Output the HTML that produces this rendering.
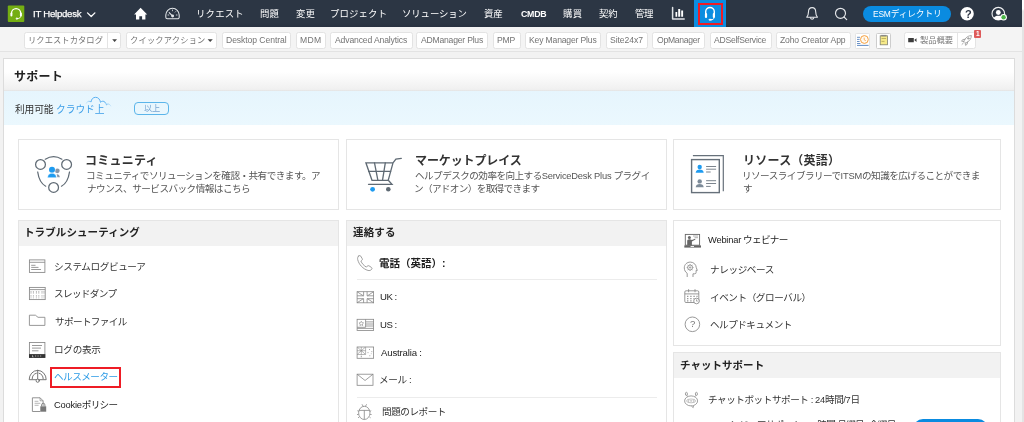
<!DOCTYPE html>
<html lang="ja">
<head>
<meta charset="utf-8">
<title>サポート - ServiceDesk Plus</title>
<style>
*{box-sizing:border-box;margin:0;padding:0}
html,body{width:1024px;height:422px;overflow:hidden}
body{position:relative;background:#f2f2f2;font-family:"Liberation Sans","Noto Sans CJK JP",sans-serif;font-size:9.75px;color:#333}
.t{will-change:transform;position:absolute;white-space:nowrap;line-height:1;z-index:5}
.a{position:absolute}
#hdr{left:0;top:0;width:1024px;height:27.3px;background:linear-gradient(#2c3644 0%,#2c3644 85%,#283140 100%)}
#tabon{left:694px;top:0;width:32px;height:27.3px;background:#0c8de0}
#tabred{left:698px;top:3px;width:25.2px;height:21.8px;border:2px solid #ee1c25}
#esm{left:862.5px;top:5.5px;width:88.5px;height:16.5px;border-radius:9px;background:#0a8be0}
#tbar{left:0;top:27.3px;width:1024px;height:24.4px;background:#f4f4f4;border-bottom:1px solid #e3e3e3}
.btn{position:absolute;top:32px;height:16.7px;background:#fff;border:1px solid #e3e3e3;border-radius:2.5px}
#rstrip{left:1022.2px;top:0;width:2px;height:422px;background:linear-gradient(#fff 0,#fff 9px,#e4e4e4 11px,#e4e4e4 100%);z-index:9}
#panel{left:3.3px;top:57.8px;width:1012.2px;height:380px;background:#fff;border:1px solid #dcdcdc}
#ptitle{left:4.3px;top:58.8px;width:1010.2px;height:32.6px;background:linear-gradient(#fff 0%,#fff 40%,#f0f0f0 95%,#e2e2e2 100%)}
#band{left:4.3px;top:91.4px;width:1010.2px;height:33.4px;background:linear-gradient(#e6f5fd,#ebf8fe)}
#more{left:134px;top:102px;width:35px;height:12.6px;border:1px solid #5bb5ea;border-radius:4px}
.card{position:absolute;top:139px;height:70.5px;background:#fff;border:1px solid #e5e5e5}
.sec{position:absolute;background:#fff;border:1px solid #e5e5e5}
.sech{position:absolute;background:#f2f2f2}
.sep{position:absolute;height:1px;background:#ececec}
#hred{left:50.3px;top:366.5px;width:70.5px;height:21.1px;border:2px solid #ee1c25}
#chatbtn{left:913px;top:418.5px;width:75px;height:20px;border-radius:10px;background:#0a8be0}
svg{position:absolute;overflow:visible}
.l{letter-spacing:-0.2px;font-size:.97em}
</style>
</head>
<body>
<div class="a" id="hdr"></div>
<div class="a" id="tabon"></div>
<div class="a" id="tabred"></div>
<div class="a" id="esm"></div>
<div class="a" id="tbar"></div>
<div class="btn" style="left:24.3px;width:97.2px"></div>
<div class="a" style="left:107.4px;top:33px;width:1px;height:14.5px;background:#e4e4e4"></div>
<div class="btn" style="left:126.2px;width:91.3px"></div>
<div class="btn" style="left:222px;width:69.3px"></div>
<div class="btn" style="left:295.8px;width:30px"></div>
<div class="btn" style="left:329.5px;width:83px"></div>
<div class="btn" style="left:416.3px;width:72.2px"></div>
<div class="btn" style="left:493px;width:27.5px"></div>
<div class="btn" style="left:524.5px;width:76.8px"></div>
<div class="btn" style="left:605.5px;width:42px"></div>
<div class="btn" style="left:652px;width:52.5px"></div>
<div class="btn" style="left:709.5px;width:62.5px"></div>
<div class="btn" style="left:776px;width:74.6px"></div>
<div class="btn" style="left:855.3px;width:15.2px;top:33px;height:15.5px;border-radius:1.5px"></div>
<div class="btn" style="left:875.6px;width:15.5px;top:33px;height:15.5px;border-radius:1.5px;border-color:#cdcdcd"></div>
<div class="btn" style="left:903.8px;width:72.7px"></div>
<div class="a" style="left:957px;top:33px;width:1px;height:14.5px;background:#e4e4e4"></div>
<div class="a" style="left:974.4px;top:29.6px;width:6.6px;height:8.2px;background:#de5b5b;border-radius:1px"></div>
<div class="a" id="rstrip"></div>
<div class="a" id="panel"></div>
<div class="a" id="ptitle"></div>
<div class="a" id="band"></div>
<div class="a" id="more"></div>
<div class="card" style="left:18px;width:320.5px"></div>
<div class="card" style="left:345.7px;width:321.3px"></div>
<div class="card" style="left:673px;width:327.7px"></div>
<div class="sec" style="left:18px;top:219.5px;width:320.5px;height:230px"></div>
<div class="sech" style="left:19px;top:220.5px;width:318.5px;height:25.3px"></div>
<div class="sec" style="left:345.7px;top:219.5px;width:321.3px;height:230px"></div>
<div class="sech" style="left:346.7px;top:220.5px;width:319.3px;height:25.3px"></div>
<div class="sep" style="left:356.7px;top:279px;width:300px"></div>
<div class="sep" style="left:356.7px;top:397.3px;width:300px"></div>
<div class="sec" style="left:673px;top:219.5px;width:327.7px;height:126px"></div>
<div class="sec" style="left:673px;top:352px;width:327.7px;height:100px"></div>
<div class="sech" style="left:674px;top:353px;width:325.7px;height:25px"></div>
<div class="a" id="hred"></div>
<div class="a" id="chatbtn"></div>
<svg class="a" style="left:0;top:0;z-index:3" width="1024" height="422" viewBox="0 0 1024 422" fill="none">
<!-- cloud -->
<defs><linearGradient id="cg" x1="86" y1="0" x2="111.500" y2="0" gradientUnits="userSpaceOnUse"><stop offset="0" stop-color="#5eb3f0" stop-opacity=".15"/><stop offset=".22" stop-color="#4aa8f0" stop-opacity=".9"/><stop offset=".75" stop-color="#4aa8f0" stop-opacity=".9"/><stop offset="1" stop-color="#5eb3f0" stop-opacity=".1"/></linearGradient></defs>
<path d="M86.200 103.400c.6 -1.300 1.400 -2 2.400 -2.100c1 -.1 1.800 .1 2.500 .6c.1 -2.600 2 -4.600 4.500 -4.600c2.600 0 4.400 2 4.900 5c1.200 -1.300 3.200 -1.500 4.400 -.2c1 1 1.400 2 1.600 2.800c.8 -.9 1.900 -1.100 2.700 -.6c.8 .5 1.400 1.100 1.900 1.900" stroke="url(#cg)" stroke-width="1" stroke-linecap="round" stroke-linejoin="round"/>
<!-- community -->
<g stroke="#5f6a74" stroke-width="1.25" stroke-linecap="round">
<circle cx="40.500" cy="164.400" r="4.900" fill="#fff"/>
<circle cx="66.600" cy="164.400" r="4.900" fill="#fff"/>
<circle cx="53.600" cy="187.400" r="4.900" fill="#fff"/>
<path d="M45.300 159.200Q53.600 154.200 61.900 159.200"/>
<path d="M37.700 172Q39.300 182.900 45.700 186.200"/>
<path d="M69.500 172Q67.900 182.900 61.500 186.200"/>
</g>
<circle cx="57.300" cy="170.800" r="2.400" fill="#8896a8"/>
<path d="M56.600 174.200c1.800 -.2 3 .8 3.200 3h-2.400z" fill="#8896a8"/>
<circle cx="52" cy="169.700" r="3.500" fill="#fff"/>
<circle cx="52" cy="169.700" r="3" fill="#1e9bf0"/>
<path d="M47.500 177.700c.2 -3.200 2.100 -4.500 4.500 -4.500s4.300 1.300 4.500 4.500z" fill="#1e9bf0" stroke="#fff" stroke-width=".5"/>
<!-- cart -->
<g stroke="#5f6a74" stroke-width="1.300" stroke-linejoin="miter" stroke-linecap="round">
<path d="M401.300 158.300l-5.400 .8l-2.900 3.700h-27.100l6.100 17.500h16.200l4.800 -17.500"/>
<path d="M374.500 162.800l3.400 17.500M385.300 162.800l-2.800 17.500M368.600 171.400h22"/>
<path d="M388.300 180.300l3.700 4h-23.500"/>
</g>
<circle cx="372.600" cy="189.300" r="2.400" fill="#1e9bf0"/>
<circle cx="388.300" cy="189.300" r="2.300" fill="#5f6a74"/>
<!-- resources -->
<g stroke="#66707a" stroke-width="1.400">
<rect x="691.600" y="159.600" width="27.700" height="33" fill="#fff"/>
<path d="M692.900 155.700h30.400v35.600" stroke-width="1.200"/>
</g>
<circle cx="699.700" cy="167" r="2.200" fill="#1e9bf0"/>
<path d="M695.700 172.700c.2 -2.400 1.800 -3.200 4 -3.200s3.800 .8 4 3.200z" fill="#1e9bf0"/>
<circle cx="699.700" cy="181.400" r="2.200" fill="#7d8b99"/>
<path d="M695.700 187.200c.2 -2.400 1.800 -3.200 4 -3.200s3.800 .8 4 3.200z" fill="#7d8b99"/>
<g stroke="#7b848d" stroke-width="1">
<path d="M706.100 166.500h10M706.100 169.200h10M706.100 172h4.600M706.100 180.700h10M706.100 183.500h10M706.100 186.400h4.600"/>
</g>
</svg>
<svg class="a" style="left:0;top:0;z-index:3" width="1024" height="422" viewBox="0 0 1024 422" fill="none">
<!-- logo -->
<rect x="7.8" y="5.4" width="16.500" height="16.600" rx="1" fill="#74ae12"/>
<g stroke="#fff" fill="none" stroke-linecap="round">
<path d="M11.500 13.800v-.6a4.600 4.600 0 0 1 9.200 0v.6" stroke-width="1.300"/>
<path d="M11.400 13.400v2.200M20.900 13.400v2.200" stroke-width="2"/>
<path d="M20.900 15.800c0 2 -1.600 2.800 -3.600 2.800" stroke-width="0.900"/>
<circle cx="16.900" cy="18.600" r="0.800" fill="#fff" stroke-width="0.600"/>
</g>
<!-- caret -->
<path d="M87.500 12.900l3.700 3.600 3.700-3.600" stroke="#fff" stroke-width="1.3" stroke-linecap="round" stroke-linejoin="round"/>
<!-- home -->
<path d="M140.6 7.8l6.6 6.8h-1.8v4.8h-3.3v-3.2h-2.8v3.2h-3.3v-4.8h-1.9z" fill="#fff"/>
<!-- dashboard -->
<g stroke="#e4e7ea" stroke-width="1.05" stroke-linecap="round" stroke-linejoin="round">
<path d="M165.8 17.2v-2.2a6.7 6.7 0 0 1 13.4 0v2.2a1.6 1.6 0 0 1 -1.6 1.6h-10.2a1.6 1.6 0 0 1 -1.6 -1.6z"/>
<path d="M169.2 12.6l3.2 3.2"/>
<circle cx="172.6" cy="16" r="0.9" fill="#eceef1"/>
<path d="M172.5 10v.8M168 15h.8M176.3 15h.8M175.7 11.6l-.5.5" stroke-width=".8"/>
</g>
<!-- chart -->
<path d="M672.6 7.6v11.3h11.6" stroke="#dfe2e6" stroke-width="1.5" stroke-linecap="round" stroke-linejoin="round"/>
<path d="M675.5 12h1.7v4.8h-1.7zM678.2 8.9h2v7.9h-2zM681.2 10.6h1.9v6.2h-1.9z" fill="#fff"/>
<!-- active headset -->
<g stroke="#fff" fill="none" stroke-linecap="round">
<path d="M705.7 13.600v-1.800a4.300 4.300 0 0 1 8.600 0v1.800" stroke-width="1.4"/>
<path d="M706 14v3M713.900 14v3" stroke-width="2.2"/>
<path d="M714 18c0 1.200 -1.400 1.800 -3 1.800" stroke-width="0.9"/>
<ellipse cx="710.2" cy="19.800" rx="1.500" ry="0.700" fill="#fff" stroke-width=".4"/>
</g>
<!-- bell -->
<g stroke="#e6e8eb" stroke-width="1.1" stroke-linejoin="round" stroke-linecap="round">
<path d="M812.1 7.6c2.4 0 3.6 1.9 3.6 4.2 0 2.6.6 4 1.7 5.4h-10.6c1.100 -1.400 1.700 -2.800 1.700 -5.400 0 -2.300 1.200 -4.200 3.600 -4.200z"/>
<path d="M810.500 17.800a1.700 1.700 0 0 0 3.300 0"/>
</g>
<!-- search -->
<g stroke="#e6e8eb" stroke-width="1.15" stroke-linecap="round">
<circle cx="840.5" cy="13.300" r="5"/>
<path d="M844 17l2.700 2.600"/>
</g>
<!-- help -->
<circle cx="967.1" cy="13.700" r="6.700" fill="#fff"/>
<!-- user -->
<g>
<circle cx="998.3" cy="13.700" r="6.300" stroke="#f1f2f4" stroke-width="1.100"/>
<circle cx="998.3" cy="12.500" r="2.400" fill="#fff"/>
<path d="M993.600 18.000c1.000 -1.700 2.800 -2.300 4.700 -2.300s3.700 .6 4.700 2.300c-1.200 1.400 -2.900 2.000 -4.700 2.000s-3.500 -.6 -4.700 -2.000z" fill="#fff"/>
<circle cx="1003.600" cy="17.200" r="3.300" fill="#fff"/>
<circle cx="1003.600" cy="17.200" r="2.200" fill="#4cb648"/>
</g>
</svg>
<svg class="a" style="left:0;top:0;z-index:3" width="1024" height="422" viewBox="0 0 1024 422" fill="none">
<g stroke="#878787" stroke-width=".85">
<!-- syslog -->
<rect x="29.400" y="259.900" width="15.500" height="12.500"/>
<path d="M29.400 262.300h15.500M31.200 265.300h4.300M31.200 267.400h7.300M31.200 269.500h9.800"/>
<!-- thread dump -->
<rect x="29.400" y="287.400" width="15.800" height="12.200"/>
<path d="M29.400 289.600h15.800"/>
<path d="M31 291v3M33.400 291v3M36.400 291v3M38.800 291v3M42 291v3M44 291v3M31 295.300v3M33.400 295.300v3M36.400 295.300v3M38.800 295.300v3M42 295.300v3M44 295.300v3" stroke="#999" stroke-width=".9" stroke-dasharray=".8 .5"/>
<!-- folder -->
<path d="M29.400 315.200h6l2.600 2.100h6.900v8.100h-15.500z"/>
<!-- log view -->
<rect x="29.400" y="342.500" width="15.500" height="15"/>
<path d="M32 345.500h10M32 348.100h9M32 350.800h6.500"/>
</g>
<rect x="29" y="354.100" width="16.300" height="3.800" fill="#333"/>
<path d="M32.500 355.300v1.600h1M35 356h1.200M37.500 356h1.200M40 356h1.200" stroke="#ddd" stroke-width=".7"/>
<!-- health meter -->
<g stroke="#666" stroke-width=".9" stroke-linecap="round">
<path d="M29.200 379.300a8.500 8.900 0 0 1 17 0z"/>
<path d="M37.700 370.200v8.800"/>
<path d="M32.200 378.800a5.500 5.800 0 0 1 4.200 -5.600M39 373.200a5.500 5.800 0 0 1 4.200 5.600"/>
<circle cx="37.700" cy="380.700" r="1.600" fill="#fff"/>
</g>
<!-- cookie policy -->
<g stroke="#878787" stroke-width=".9" stroke-linejoin="round">
<path d="M40.300 411.500h-7.900v-13.700h7.700l3 3v5.200"/>
<path d="M40.100 397.800v3h3" stroke-width=".7"/>
<path d="M34.600 401.300h3.800M34.600 403.300h5.800M34.600 405.300h4" stroke="#999" stroke-width=".7"/>
<path d="M41.600 406.400v-1.500a1.650 1.650 0 0 1 3.300 0v1.500" stroke="#878787" stroke-width="1"/>
</g>
<rect x="40.300" y="406.300" width="5.900" height="5.400" fill="#777"/>
</svg>
<svg class="a" style="left:0;top:0;z-index:3" width="1024" height="422" viewBox="0 0 1024 422" fill="none">
<g stroke="#8c8c8c" stroke-width=".85" stroke-linejoin="round" stroke-linecap="round">
<!-- phone -->
<path d="M358.600 256c.8 -.6 1.600 -.6 2.100 .1l1.500 2.500c.4 .7 .2 1.400 -.5 1.900l-.8 .6c1 2.400 3 4.600 5.500 6l.8 -.9c.5 -.6 1.200 -.7 1.900 -.3l2.300 1.500c.7 .5 .8 1.300 .2 2c-1 1.100 -2.300 1.400 -3.700 1c-4.800 -1.400 -9 -5.800 -10.200 -10.800c-.3 -1.400 0 -2.700 .9 -3.600z"/>
</g>
<g stroke="#878787" stroke-width=".8">
<!-- UK -->
<rect x="357.100" y="291.700" width="16.500" height="11.100"/>
<path d="M357.100 291.700l6.300 4.200M373.600 291.700l-6.300 4.200M357.100 302.800l6.300 -4.200M373.600 302.800l-6.300 -4.200"/>
<path d="M363.600 291.700v4.100h-6.500M367.100 291.700v4.100h6.500M363.600 302.800v-4.100h-6.500M367.100 302.800v-4.100h6.500"/>
<!-- US -->
<rect x="357.100" y="319.300" width="16.500" height="11.200"/>
<path d="M365.600 319.300v8h-8.500M365.600 321.900h8M365.600 324h8M365.600 326h8M357.100 328.400h16.500"/>
<path d="M361.300 321.200l.7 1.500 1.600 .2 -1.200 1.100 .3 1.600 -1.400 -.8 -1.400 .8 .3 -1.600 -1.200 -1.100 1.600 -.2z" stroke-width=".6"/>
<!-- AU -->
<rect x="357.100" y="347" width="16.500" height="11.300"/>
<path d="M357.100 354.500h8.500v-7.500M361.300 347v7.500M357.100 350.700h8.500M357.500 347.300l7.800 6.900M365.200 347.300l-7.800 6.900" stroke-width=".6"/>
<path d="M361.300 355.700v1.600" />
<path d="M369.500 349.200v.8M371.800 351.300v.8M368 352.300v.8M369.800 355.400v.8M371.300 353.600v.5" stroke-width=".9"/>
<!-- mail -->
<rect x="357.100" y="374.200" width="15.900" height="11.100"/>
<path d="M357.100 374.200l7.950 6.300l7.950 -6.300"/>
<!-- bug -->
<ellipse cx="364.300" cy="412.900" rx="5.700" ry="6.600"/>
<path d="M358.800 410.400h11M364.300 410.400v9M362 404.300l1.200 2M366.600 404.300l-1.200 2M358.700 411.500l-1.300 -.8M369.900 411.500l1.300 -.8M358.500 414.500h-1.500M370.100 414.500h1.500M359.200 417l-1.200 .8M369.400 417l1.200 .8" />
</g>
</svg>
<svg class="a" style="left:0;top:0;z-index:3" width="1024" height="422" viewBox="0 0 1024 422" fill="none">
<!-- webinar -->
<rect x="685.300" y="234.400" width="14.300" height="10.800" stroke="#666" stroke-width=".9"/>
<rect x="684.300" y="245.400" width="16.700" height="2.200" fill="#666"/>
<rect x="690.600" y="246.100" width="3.400" height=".9" fill="#fff"/>
<circle cx="689.400" cy="237.400" r="1.500" fill="#666"/>
<path d="M687.200 245.400v-4.200c0 -1.200 .8 -1.900 2.200 -1.900c1 0 1.800 .2 2.500 .8l3.200 -1.400l.4 .9l-3.600 2v3.800z" fill="#666"/>
<path d="M693 236h5M694.500 237.700h3.500" stroke="#8c8c8c" stroke-width=".7"/>
<!-- knowledge -->
<g stroke="#878787" stroke-width=".85" stroke-linejoin="round">
<path d="M687.200 277v-3.700c-1.800 -1.200 -2.900 -3.100 -2.900 -5.400c0 -3.500 2.700 -5.800 6 -5.800c3.400 0 5.800 2.400 6 5.600l1 2.700h-1.200v2c0 .9 -.5 1.400 -1.400 1.400h-1.700v3.200"/>
<circle cx="690.100" cy="267.500" r="2.500"/>
<circle cx="690.100" cy="267.500" r=".7"/>
<path d="M690.100 264.100v.9M690.100 270v.9M686.700 267.500h.9M692.600 267.500h.9M687.700 265.100l.6 .6M691.900 269.300l.6 .6M687.700 269.900l.6 -.6M691.900 265.700l.6 -.6" stroke-width=".7"/>
</g>
<!-- event -->
<g stroke="#878787" stroke-width=".85">
<rect x="684.800" y="290.800" width="14" height="11.700" rx="1.200"/>
<path d="M684.800 293.900h14M688.600 289.200v3M695 289.200v3"/>
<path d="M687 296.300h1.400M690.200 296.300h1.400M693.400 296.300h1.400M696.400 296.300h1.200M687 298.600h1.400M690.200 298.600h1.400M693.400 298.600h1M687 300.800h1.400M690.200 300.800h1.400" stroke-width="1.200" stroke="#999"/>
<circle cx="696.500" cy="301" r="2.800" fill="#fff"/>
<path d="M696.500 299.400v1.700h1.300" stroke-width=".7"/>
</g>
<!-- help -->
<circle cx="692.400" cy="324.300" r="7.300" stroke="#878787" stroke-width=".85"/>
<!-- chatbot -->
<g stroke="#878787" stroke-width=".8">
<ellipse cx="691.100" cy="400.900" rx="6.500" ry="5"/>
<path d="M691.300 405.900l1.900 1.700l.3 -2.100" stroke-linejoin="round" fill="#fff"/>
<ellipse cx="686.400" cy="393.900" rx="1" ry="1.600"/>
<ellipse cx="696.400" cy="393.900" rx="1" ry="1.600"/>
<path d="M687 395.400l.8 1.200M695.800 395.400l-.8 1.200"/>
<ellipse cx="691.100" cy="400.900" rx="4.600" ry="1.900" stroke="#999" stroke-width=".6"/>
<g stroke="#999" stroke-width=".5"><circle cx="688.500" cy="400.900" r=".6"/><circle cx="691.100" cy="400.900" r=".6"/><circle cx="693.700" cy="400.900" r=".6"/></g>
</g>
</svg>
<svg class="a" style="left:0;top:0;z-index:3" width="1024" height="422" viewBox="0 0 1024 422" fill="none">
<!-- carets -->
<path d="M112.2 39.3h4.8l-2.400 2.600z" fill="#444"/>
<path d="M207.6 39.3h5.200l-2.600 2.800z" fill="#444"/>
<!-- schedule icon -->
<g stroke="#5b86c0" stroke-width="0.9">
<path d="M857 37.300h3M857 39.400h2.600M857 41.500h2.600M857 43.500h3.400"/>
<path d="M857 45.400h11.600" stroke="#4f7fbd"/>
</g>
<circle cx="864.400" cy="39.500" r="3.900" fill="#fffaf2" stroke="#f5a040" stroke-width="1"/>
<path d="M864.200 37.600v2.200l1.600 .9" stroke="#f5a040" stroke-width=".8"/>
<!-- note icon -->
<rect x="880.200" y="35.800" width="7.200" height="9" fill="#f7ea8a" stroke="#808070" stroke-width=".8"/>
<path d="M881.200 34.900h5.200v1.500h-5.200z" fill="#8b8b86"/>
<path d="M881.500 38.500h4.600M881.500 41.400h3" stroke="#b0a455" stroke-width=".8"/>
<!-- camera -->
<path d="M908.2 38h5.600v4.200h-5.600zM914.2 40.100l2.300 -1.900v3.800z" fill="#3c3c3c"/>
<!-- rocket -->
<g stroke="#808080" stroke-width=".75" stroke-linejoin="round" stroke-linecap="round" transform="translate(966.6 39.8) scale(.88) translate(-966.6 -39.8)">
<path d="M971.600 35c-3 .1 -5.200 1.600 -7 4.400l-1.200 2 2.200 2.200 2 -1.200c2.800 -1.800 4.300 -4 4.400 -7z" fill="#fff"/>
<path d="M964.800 39.200l-2.600 .3 -1.300 1.900 2.300 .3M967.600 42.300l-.3 2.500 -1.900 1.300 -.3 -2.200M963 43.400l-1.600 1.600"/>
<circle cx="968.500" cy="38.200" r=".9"/>
</g>
</svg>

<!-- text -->
<span class="t" id="h_it" style="left:32.90px;top:9.30px;font-size:9.60px;color:#fff;letter-spacing:-0.250px;-webkit-text-stroke:0.25px #fff;">IT Helpdesk</span>
<span class="t" id="h_req" style="left:196.25px;top:8.50px;font-size:9.40px;color:#fff;letter-spacing:0.188px;">リクエスト</span>
<span class="t" id="h_prob" style="left:259.50px;top:8.50px;font-size:9.40px;color:#fff;">問題</span>
<span class="t" id="h_chg" style="left:295.50px;top:8.50px;font-size:9.40px;color:#fff;">変更</span>
<span class="t" id="h_proj" style="left:330.25px;top:8.50px;font-size:9.40px;color:#fff;letter-spacing:0.150px;">プロジェクト</span>
<span class="t" id="h_sol" style="left:402.00px;top:8.50px;font-size:9.40px;color:#fff;letter-spacing:-0.083px;">ソリューション</span>
<span class="t" id="h_asset" style="left:484.25px;top:8.50px;font-size:9.40px;color:#fff;letter-spacing:-0.250px;">資産</span>
<span class="t" id="h_cmdb" style="left:520.75px;top:10.00px;font-size:8.80px;color:#fff;font-weight:700;letter-spacing:-0.250px;">CMDB</span>
<span class="t" id="h_pur" style="left:562.75px;top:8.50px;font-size:9.40px;color:#fff;letter-spacing:0.250px;">購買</span>
<span class="t" id="h_con" style="left:599.00px;top:8.50px;font-size:9.40px;color:#fff;letter-spacing:-0.250px;">契約</span>
<span class="t" id="h_adm" style="left:635.25px;top:8.50px;font-size:9.40px;color:#fff;letter-spacing:-0.500px;">管理</span>
<span class="t" id="h_esm" style="left:872.75px;top:9.68px;font-size:8.70px;color:#fff;letter-spacing:-0.094px;"><span class="l">ESM</span>ディレクトリ</span>
<span class="t" id="p_title" style="left:14.10px;top:71.47px;font-size:12.00px;color:#222;font-weight:700;letter-spacing:0.250px;">サポート</span>
<span class="t" id="b_avail" style="left:14.75px;top:104.88px;font-size:9.75px;color:#333;letter-spacing:-0.183px;">利用可能</span>
<span class="t" id="b_cloud" style="left:55.75px;top:104.88px;font-size:9.75px;color:#3d9fe8;letter-spacing:-0.062px;">クラウド上</span>
<span class="t" id="b_more" style="left:144.00px;top:105.12px;font-size:8.20px;color:#78a5d2;letter-spacing:-0.250px;">以上</span>
<span class="t" id="c1_t" style="left:85.40px;top:154.75px;font-size:12.00px;color:#333;font-weight:700;letter-spacing:0.260px;">コミュニティ</span>
<span class="t" id="c1_l1" style="left:86.40px;top:170.62px;font-size:9.60px;color:#555;letter-spacing:-0.522px;">コミュニティでソリューションを確認・共有できます。ア</span>
<span class="t" id="c1_l2" style="left:86.65px;top:184.43px;font-size:9.60px;color:#555;letter-spacing:-0.522px;">ナウンス、サービスバック情報はこちら</span>
<span class="t" id="c2_t" style="left:414.80px;top:154.75px;font-size:12.00px;color:#333;font-weight:700;letter-spacing:-0.105px;">マーケットプレイス</span>
<span class="t" id="c2_l1" style="left:414.55px;top:170.62px;font-size:9.60px;color:#555;letter-spacing:-0.543px;">ヘルプデスクの効率を向上する<span class="l">ServiceDesk Plus</span> プラグイ</span>
<span class="t" id="c2_l2" style="left:414.30px;top:184.43px;font-size:9.60px;color:#555;letter-spacing:-0.639px;">ン（アドオン）を取得できます</span>
<span class="t" id="c3_t" style="left:742.65px;top:154.75px;font-size:12.00px;color:#333;font-weight:700;letter-spacing:0.242px;">リソース（英語）</span>
<span class="t" id="c3_l1" style="left:741.90px;top:170.62px;font-size:9.60px;color:#555;letter-spacing:-0.534px;">リソースライブラリーで<span class="l">ITSM</span>の知識を広げることができま</span>
<span class="t" id="c3_l2" style="left:743.40px;top:184.43px;font-size:9.60px;color:#555;">す</span>
<span class="t" id="s1_t" style="left:24.20px;top:227.35px;font-size:10.50px;color:#222;font-weight:700;letter-spacing:0.095px;">トラブルシューティング</span>
<span class="t" id="s1_1" style="left:54.00px;top:261.50px;font-size:9.60px;color:#333;letter-spacing:-0.389px;">システムログビューア</span>
<span class="t" id="s1_2" style="left:53.50px;top:289.23px;font-size:9.60px;color:#333;letter-spacing:-0.642px;">スレッドダンプ</span>
<span class="t" id="s1_3" style="left:54.50px;top:316.52px;font-size:9.60px;color:#333;letter-spacing:-0.627px;">サポートファイル</span>
<span class="t" id="s1_4" style="left:53.75px;top:344.82px;font-size:9.60px;color:#333;letter-spacing:-0.275px;">ログの表示</span>
<span class="t" id="s1_5" style="left:53.55px;top:371.65px;font-size:9.60px;color:#2c9be6;letter-spacing:-0.500px;">ヘルスメーター</span>
<span class="t" id="s1_6" style="left:53.80px;top:400.25px;font-size:9.60px;color:#222;letter-spacing:-0.667px;"><span class="l">Cookie</span>ポリシー</span>
<span class="t" id="s2_t" style="left:352.75px;top:227.35px;font-size:10.50px;color:#222;font-weight:700;letter-spacing:0.167px;">連絡する</span>
<span class="t" id="s2_1" style="left:379.40px;top:257.75px;font-size:10.50px;color:#222;font-weight:700;">電話（英語）:</span>
<span class="t" id="s2_2" style="left:379.75px;top:291.62px;font-size:9.60px;color:#222;letter-spacing:-0.500px;">UK :</span>
<span class="t" id="s2_3" style="left:379.75px;top:319.82px;font-size:9.60px;color:#222;letter-spacing:-0.500px;">US :</span>
<span class="t" id="s2_4" style="left:380.50px;top:348.00px;font-size:9.60px;color:#222;letter-spacing:-0.170px;">Australia :</span>
<span class="t" id="s2_5" style="left:378.85px;top:375.12px;font-size:9.60px;color:#333;letter-spacing:-0.362px;">メール :</span>
<span class="t" id="s2_6" style="left:381.80px;top:407.10px;font-size:9.60px;color:#333;letter-spacing:-0.449px;">問題のレポート</span>
<span class="t" id="s3_1" style="left:708.00px;top:235.07px;font-size:9.60px;color:#222;letter-spacing:-0.675px;"><span class="l">Webinar</span> ウェビナー</span>
<span class="t" id="s3_2" style="left:709.75px;top:264.77px;font-size:9.60px;color:#333;letter-spacing:-0.375px;">ナレッジベース</span>
<span class="t" id="s3_3" style="left:709.50px;top:293.20px;font-size:9.60px;color:#333;letter-spacing:-0.425px;">イベント（グローバル）</span>
<span class="t" id="s3_4" style="left:709.75px;top:319.75px;font-size:9.60px;color:#333;letter-spacing:-0.500px;">ヘルプドキュメント</span>
<span class="t" id="s4_t" style="left:680.00px;top:359.75px;font-size:10.50px;color:#222;font-weight:700;letter-spacing:0.036px;">チャットサポート</span>
<span class="t" id="s4_1" style="left:707.60px;top:394.65px;font-size:9.60px;color:#333;letter-spacing:-0.455px;">チャットボットサポート : <span class="l">24</span>時間/<span class="l">7</span>日</span>
<span class="t" id="s4_2" style="left:721.25px;top:420.00px;font-size:9.60px;color:#333;letter-spacing:-0.663px;">エンジニアサポート : <span class="l">24</span>時間 月曜日~金曜日</span>
<span class="t" id="tb_rc" style="left:27.65px;top:36.55px;font-size:8.25px;color:#747474;letter-spacing:0.088px;">リクエストカタログ</span>
<span class="t" id="tb_qa" style="left:130.00px;top:36.55px;font-size:8.25px;color:#747474;letter-spacing:0.188px;">クイックアクション</span>
<span class="t" id="tb_dc" style="left:226.25px;top:35.95px;font-size:8.60px;color:#747474;letter-spacing:-0.071px;">Desktop Central</span>
<span class="t" id="tb_mdm" style="left:300.00px;top:35.95px;font-size:8.60px;color:#747474;letter-spacing:0.375px;">MDM</span>
<span class="t" id="tb_aa" style="left:335.00px;top:35.95px;font-size:8.60px;color:#747474;letter-spacing:-0.132px;">Advanced Analytics</span>
<span class="t" id="tb_adm" style="left:421.25px;top:35.95px;font-size:8.60px;color:#747474;letter-spacing:-0.211px;">ADManager Plus</span>
<span class="t" id="tb_pmp" style="left:497.25px;top:35.95px;font-size:8.60px;color:#747474;letter-spacing:-0.250px;">PMP</span>
<span class="t" id="tb_kmp" style="left:528.75px;top:35.95px;font-size:8.60px;color:#747474;letter-spacing:-0.167px;">Key Manager Plus</span>
<span class="t" id="tb_s24" style="left:610.00px;top:35.95px;font-size:8.60px;color:#747474;letter-spacing:-0.071px;">Site24x7</span>
<span class="t" id="tb_opm" style="left:656.50px;top:35.95px;font-size:8.60px;color:#747474;letter-spacing:-0.281px;">OpManager</span>
<span class="t" id="tb_ads" style="left:714.30px;top:35.95px;font-size:8.60px;color:#747474;letter-spacing:-0.254px;">ADSelfService</span>
<span class="t" id="tb_zca" style="left:780.15px;top:35.95px;font-size:8.60px;color:#747474;letter-spacing:-0.150px;">Zoho Creator App</span>
<span class="t" id="tb_ov" style="left:920.00px;top:36.35px;font-size:8.30px;color:#787878;letter-spacing:-0.067px;">製品概要</span>
<span class="t" id="tb_badge" style="left:976.20px;top:31.40px;font-size:6.50px;color:#fff;font-weight:700;">1</span>
<span class="t" id="h_q" style="left:964.50px;top:9.40px;font-size:11.00px;color:#2b3444;font-weight:700;">?</span>
<span class="t" id="s3_q" style="left:689.60px;top:318.60px;font-size:9.50px;color:#777;">?</span>
</body>
</html>
